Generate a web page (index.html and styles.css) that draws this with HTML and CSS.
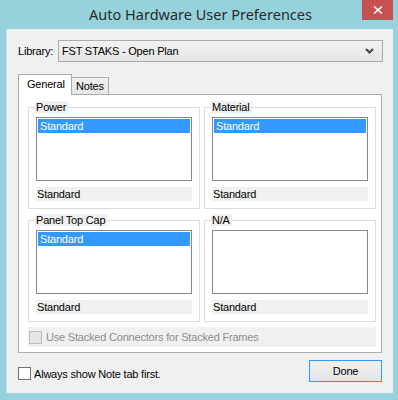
FILE: index.html
```html
<!DOCTYPE html>
<html>

<head>
    <meta charset="UTF-8">
    <title>Auto Hardware User Preferences</title>
    <link rel="stylesheet" href="styles.css">
</head>

<body>
    <div class="window">
        <div class="titlebar">
            <span></span>
            <span class="title">Auto Hardware User Preferences</span>
            <span class="close">
                <svg width="10" height="8" viewBox="0 0 10 8">
                    <path d="M1 0.5 L9 7.5 M9 0.5 L1 7.5" stroke="#fff" stroke-width="1.6" fill="none"/>
                </svg>
            </span>
        </div>
        <div class="client">
            <div class="library">
                <span class="lbl">Library:</span>
                <div class="combo">
                    <span>FST STAKS - Open Plan</span>
                    <svg width="9" height="6" viewBox="0 0 9 6">
                        <path d="M1 1 L4.5 4.5 L8 1" stroke="#444" stroke-width="2" fill="none"/>
                    </svg>
                </div>
            </div>
            <div class="tabs">
                <span class="tab active">General</span>
                <span class="tab">Notes</span>
            </div>
            <div class="panel">
                <div class="grid">
                    <fieldset class="group">
                        <legend>Power</legend>
                        <div class="list"><div class="sel">Standard</div></div>
                        <div class="static">Standard</div>
                    </fieldset>
                    <fieldset class="group">
                        <legend>Material</legend>
                        <div class="list"><div class="sel">Standard</div></div>
                        <div class="static">Standard</div>
                    </fieldset>
                    <fieldset class="group">
                        <legend>Panel Top Cap</legend>
                        <div class="list"><div class="sel">Standard</div></div>
                        <div class="static">Standard</div>
                    </fieldset>
                    <fieldset class="group">
                        <legend>N/A</legend>
                        <div class="list"></div>
                        <div class="static">Standard</div>
                    </fieldset>
                </div>
                <div class="stacked">
                    <span class="box disabled"></span>
                    <span>Use Stacked Connectors for Stacked Frames</span>
                </div>
            </div>
            <div class="bottom">
                <label class="check">
                    <span class="box"></span>
                    <span>Always show Note tab first.</span>
                </label>
                <span class="btn">Done</span>
            </div>
        </div>
    </div>
</body>
</html>
```

FILE: styles.css
```css
* {
    margin: 0;
    padding: 0;
    box-sizing: border-box;
}

body {
    background: #95d2dc;
    font-family: "Liberation Sans", Arial, sans-serif;
    font-size: 11px;
    letter-spacing: -0.2px;
    color: #000;
}

.window {
    width: 398px;
    height: 400px;
    padding: 0 5px 7px 6px;
    display: flex;
    flex-direction: column;
}

.titlebar {
    height: 30px;
    display: grid;
    grid-template-columns: 1fr auto 1fr;
    align-items: start;
}

.title {
    font-family: "Noto Sans", sans-serif;
    font-size: 14.5px;
    letter-spacing: 0;
    color: #2b2b2b;
    line-height: 28px;
    padding-left: 2px;
}

.close {
    justify-self: end;
    width: 31px;
    height: 20px;
    background: #c75050;
    display: flex;
    align-items: center;
    justify-content: center;
}

.client {
    flex: 1;
    background: #f0f0f0;
    border-left: 1px solid #b7e2e9;
    padding: 11px 10px 11px 11px;
}

.library {
    display: flex;
    align-items: center;
    height: 22px;
}

.lbl {
    width: 40px;
}

.combo {
    flex: 1;
    height: 22px;
    border: 1px solid #acacac;
    background: linear-gradient(#f2f2f2, #e5e5e5);
    display: flex;
    align-items: center;
    justify-content: space-between;
    padding: 0 8px 0 3px;
}

.tabs {
    display: flex;
    align-items: flex-end;
    margin-top: 12px;
    height: 20px;
    position: relative;
    z-index: 1;
}

.tab {
    height: 17px;
    padding: 0 4px;
    border: 1px solid #acacac;
    border-bottom: none;
    border-left: none;
    background: linear-gradient(#f0f0f0, #e5e5e5);
    line-height: 16px;
}

.tab.active {
    height: 21px;
    margin-bottom: -1px;
    width: 54px;
    padding: 0 0 0 8px;
    border-left: 1px solid #acacac;
    background: #fff;
    line-height: 18px;
}

.panel {
    width: 364px;
    height: 259px;
    border: 1px solid #acacac;
    background: #fff;
    padding: 6px 5px 5px 9px;
}

.grid {
    display: grid;
    grid-template-columns: 172px 172px;
    column-gap: 4px;
    row-gap: 5px;
}

.group {
    border: 1px solid #dcdcdc;
    height: 108px;
    padding: 4px 7px 0 7px;
}

legend {
    background: #f0f0f0;
    height: 12px;
    line-height: 12px;
    padding: 0 2px 0 1px;
    margin-left: -1px;
}

.list {
    height: 64px;
    border: 1px solid #828790;
    background: #fff;
    padding: 1px;
}

.sel {
    background: #3399ff;
    color: #fff;
    height: 14px;
    line-height: 14px;
    padding-left: 2px;
}

.static {
    margin-top: 6px;
    height: 14px;
    line-height: 14px;
    background: #f0f0f0;
    padding-left: 1px;
}

.stacked {
    margin-top: 5px;
    height: 20px;
    background: #f0f0f0;
    display: flex;
    align-items: center;
    gap: 4px;
    padding-left: 1px;
    color: #8d8d8d;
}

.box {
    width: 13px;
    height: 13px;
    border: 1px solid #707070;
    background: #fff;
    display: inline-block;
}

.box.disabled {
    border-color: #bcbcbc;
    background: #e6e6e6;
}

.bottom {
    display: flex;
    justify-content: space-between;
    align-items: flex-start;
    margin-top: 7px;
    padding-right: 1px;
}

.check {
    display: flex;
    align-items: center;
    gap: 3px;
    margin-top: 7px;
}

.btn {
    width: 73px;
    height: 22px;
    border: 1px solid #3399ff;
    background: linear-gradient(#f0f0f0, #e5e5e5);
    text-align: center;
    line-height: 20px;
}
```
